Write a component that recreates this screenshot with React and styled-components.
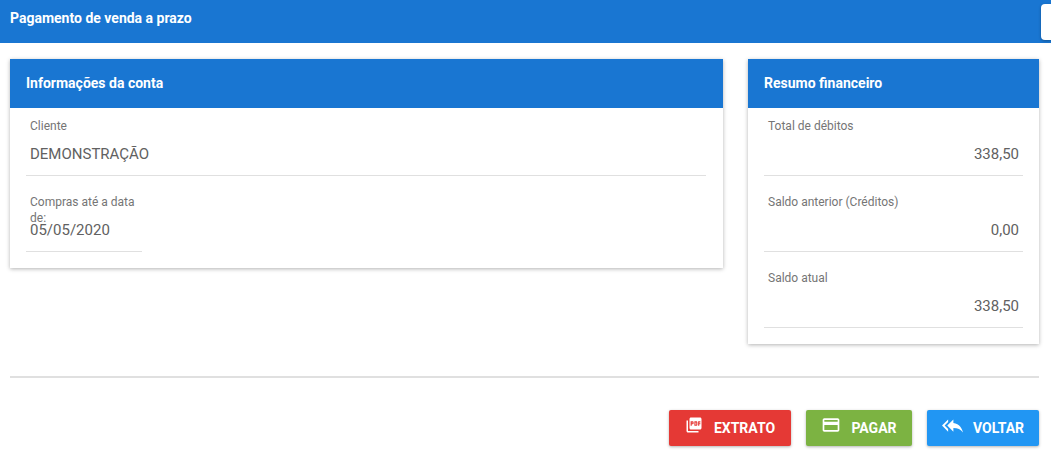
import React from 'react'
import styled, { createGlobalStyle } from 'styled-components'
import { MdPictureAsPdf, MdCreditCard, MdReplyAll } from 'react-icons/md'

const GlobalStyle = createGlobalStyle`
    html, body {
        margin: 0;
        padding: 0;
        background: #fff;
        font-family: Roboto, "Liberation Sans", sans-serif;
        overflow: hidden;
    }
`

const resumo = [
    { label: 'Total de débitos', value: '338,50' },
    { label: 'Saldo anterior (Créditos)', value: '0,00' },
    { label: 'Saldo atual', value: '338,50' },
]

const App = () => {
    return (
        <Page>
            <GlobalStyle />
            <TopBar>
                <TopTitle>Pagamento de venda a prazo</TopTitle>
                <TopButton />
            </TopBar>
            <Content>
                <Columns>
                    <Card $width="713px">
                        <CardHeader>Informações da conta</CardHeader>
                        <CardBody $right="17px">
                            <Field>
                                <FieldLabel>Cliente</FieldLabel>
                                <FieldValue>DEMONSTRAÇÃO</FieldValue>
                            </Field>
                            <Field $width="116px">
                                <FieldLabel>Compras até a data de:</FieldLabel>
                                <FieldValue>05/05/2020</FieldValue>
                            </Field>
                        </CardBody>
                    </Card>
                    <Card $width="291px">
                        <CardHeader>Resumo financeiro</CardHeader>
                        <CardBody>
                            {resumo.map((r) => (
                                <Field key={r.label}>
                                    <FieldLabel>{r.label}</FieldLabel>
                                    <FieldValue $right>{r.value}</FieldValue>
                                </Field>
                            ))}
                        </CardBody>
                    </Card>
                </Columns>
                <Divider />
                <Actions>
                    <ActionButton $bg="#e53935" $width="122px" $gap="11px">
                        <MdPictureAsPdf size={18} />
                        EXTRATO
                    </ActionButton>
                    <ActionButton $bg="#7cb342" $width="106px">
                        <MdCreditCard size={20} />
                        PAGAR
                    </ActionButton>
                    <ActionButton $bg="#2196f3" $width="112px">
                        <MdReplyAll size={21} />
                        VOLTAR
                    </ActionButton>
                </Actions>
            </Content>
        </Page>
    )
}

const Page = styled.div`
    width: 1051px;
    height: 458px;
    overflow: hidden;
`

const TopBar = styled.div`
    height: 43px;
    background: #1976d2;
    display: flex;
    align-items: center;
    justify-content: space-between;
    padding-left: 10px;
    box-sizing: border-box;
`

const TopTitle = styled.div`
    color: #fff;
    font-size: 14px;
    font-weight: 700;
    margin-top: -7px;
`

const TopButton = styled.div`
    width: 10px;
    height: 36px;
    background: #fff;
    border-radius: 4px 0 0 4px;
    box-shadow: 0 1px 3px rgba(0, 0, 0, 0.3);
`

const Content = styled.div`
    padding: 16px 12px 0 10px;
`

const Columns = styled.div`
    display: flex;
    justify-content: space-between;
    align-items: flex-start;
`

const Card = styled.div`
    width: ${(p) => p.$width};
    background: #fff;
    box-shadow: 0 1px 4px rgba(0, 0, 0, 0.3);
`

const CardHeader = styled.div`
    height: 49px;
    background: #1976d2;
    color: #fff;
    font-size: 14px;
    font-weight: 700;
    line-height: 49px;
    padding-left: 16px;
`

const CardBody = styled.div`
    padding: 0 ${(p) => p.$right || '16px'} 16px 16px;
`

const Field = styled.div`
    width: ${(p) => p.$width || 'auto'};
    height: 67px;
    margin-bottom: 8px;
    border-bottom: 1px solid #e0e0e0;
    position: relative;

    &:last-child {
        margin-bottom: 0;
    }
`

const FieldLabel = styled.div`
    position: absolute;
    top: 10px;
    left: 4px;
    right: 4px;
    font-size: 12px;
    line-height: 16px;
    color: #757575;
`

const FieldValue = styled.div`
    padding: 36px 4px 0;
    font-size: 15px;
    line-height: 20px;
    color: #616161;
    text-align: ${(p) => (p.$right ? 'right' : 'left')};
`

const Divider = styled.div`
    height: 2px;
    background: #e0e0e0;
    margin-top: 32px;
`

const Actions = styled.div`
    display: flex;
    justify-content: flex-end;
    gap: 15px;
    margin-top: 32px;
`

const ActionButton = styled.button`
    width: ${(p) => p.$width};
    height: 36px;
    border: 0;
    border-radius: 2px;
    background: ${(p) => p.$bg};
    color: #fff;
    font-family: inherit;
    font-size: 14px;
    font-weight: 700;
    display: flex;
    align-items: center;
    justify-content: center;
    gap: ${(p) => p.$gap || '10px'};
    padding: 0;
    box-shadow: 0 1px 3px rgba(0, 0, 0, 0.3);

    svg {
        margin-top: -6px;
    }
`

export default App
